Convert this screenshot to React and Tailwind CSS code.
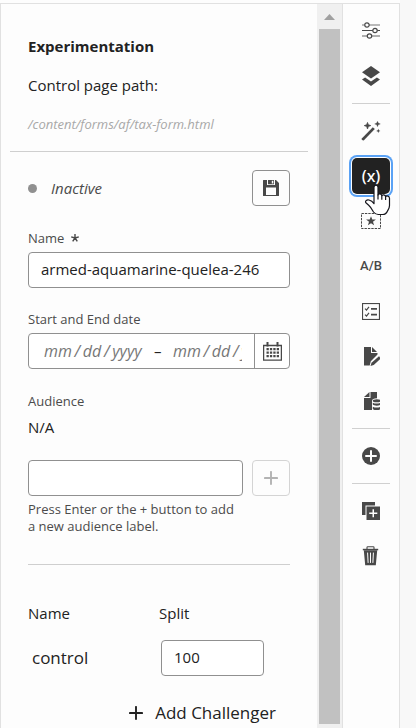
const FieldBorder = "border border-[#909090] rounded-[4px] bg-white";

function Svg({ w = 18, h = 18, className = "", children }) {
  return (
    <svg
      width={w}
      height={h}
      viewBox={`0 0 ${w} ${h}`}
      fill="currentColor"
      aria-hidden="true"
      className={`shrink-0 ${className}`}
    >
      {children}
    </svg>
  );
}

function SlidersIcon() {
  return (
    <Svg>
      <g fill="none" stroke="currentColor" strokeWidth="1.2">
        <path d="M0 3h2.8M7.2 3H18" strokeOpacity=".75" />
        <path d="M0 8.5h10.8M15.2 8.5H18" />
        <path d="M0 14h5.3M9.7 14H18" strokeOpacity=".85" />
        <circle cx="5" cy="3" r="2.2" />
        <circle cx="13" cy="8.5" r="2.2" />
        <circle cx="7.5" cy="14" r="2.2" />
      </g>
    </Svg>
  );
}

function LayersIcon() {
  return (
    <Svg h={20}>
      <path d="M9 0l9 6.2-9 6.2-9-6.2z" />
      <path d="M3.1 11.4L9 15.4l5.900-4L18 13.600 9 20l-9-6.400z" />
    </Svg>
  );
}

function WandIcon() {
  return (
    <Svg w={20} h={20}>
      <path d="M1.600 19.200L.3 17.900 11.800 6.200l2 1.900L2.700 19.600z" />
      <path d="M6.500 1.400l.9 2.300 2.400.9-2.400.9-.9 2.500-.9-2.500-2.400-.9 2.400-.9z" stroke="currentColor" strokeWidth=".7" />
      <path d="M16.500.3l.8 1.800 2 .8-2 .8-.8 2-.8-2-2-.8 2-.8z" stroke="currentColor" strokeWidth=".3" />
      <path d="M17.300 7.800l.6 1.500 1.500.6-1.500.6-.6 1.500-.6-1.500-1.500-.6 1.500-.6z" />
    </Svg>
  );
}

function StarFrameIcon() {
  return (
    <Svg w={20} h={16}>
      <rect x=".5" y=".5" width="19" height="15" fill="none" stroke="currentColor" strokeDasharray="2.4 1" />
      <path d="M10 3.200l1.300 3.400h3.600l-2.900 2.200 1.100 3.500L10 10.200l-3.100 2.100L8 8.800 5.100 6.600h3.600z" />
    </Svg>
  );
}

function ChecklistIcon() {
  return (
    <Svg h={17}>
      <rect x=".5" y=".5" width="17" height="16" fill="none" stroke="currentColor" strokeWidth="1.200" />
      <path d="M3 5.600l1.500 1.400L7 3.800M3 11.600L4.500 13 7 9.800" fill="none" stroke="currentColor" strokeWidth="1.200" />
      <path d="M9 5h6v1.700H9zM9 10.800h6v1.700H9z" />
    </Svg>
  );
}

function PageEditIcon() {
  return (
    <Svg h={20}>
      <path d="M2 1h7v6h6.500v1.400L8.800 15.300 7.700 19.500H2z" />
      <path d="M10 1l5 5h-5z" />
      <path d="M17 10.200l2 2-7.300 6.800-3.200 1 1-3.200z" />
    </Svg>
  );
}

function PageDataIcon() {
  return (
    <Svg h={20}>
      <path d="M8.500 1h6.500v6.200c-3.200 0-5 .9-5 2.600V19H2V7h6.500z" />
      <path d="M7.500 1v5H2z" />
      <ellipse cx="14.700" cy="9.700" rx="3.900" ry="1.500" />
      <path d="M10.800 11.700c2 1.200 5.800 1.200 7.800 0v1.800c-1.200 1.500-6.600 1.500-7.800 0z" />
      <path d="M10.800 15.700c2 1.200 5.800 1.200 7.800 0v2.200c-1.200 1.600-6.600 1.600-7.800 0z" />
    </Svg>
  );
}

function AddCircleIcon() {
  return (
    <Svg>
      <circle cx="9" cy="9" r="9" />
      <path d="M9 4v10M4 9h10" stroke="#fdfdfd" strokeWidth="2" strokeLinecap="round" />
    </Svg>
  );
}

function DuplicateIcon() {
  return (
    <Svg>
      <path d="M0 0h13v3.500H3.500V13H0z" />
      <path d="M4.500 4.500H18V18H4.500z" />
      <path d="M11.250 7.200v8.100M7.200 11.250h8.100" stroke="#fdfdfd" strokeWidth="1.500" />
    </Svg>
  );
}

function TrashIcon() {
  return (
    <Svg h={20}>
      <path d="M5 3V1.500Q5 .8 5.700.8h5.600q.7 0 .7.700V3" fill="none" stroke="currentColor" strokeWidth="1.100" />
      <path d="M.8 2.800h15.400v1.500H.8z" />
      <path d="M1.800 4.300h13.400l-1.400 14.900H3.200z" />
      <path d="M5.600 7l.5 9.500M8.500 7v9.500M11.400 7l-.5 9.500" stroke="#fdfdfd" strokeWidth="1" strokeLinecap="round" />
    </Svg>
  );
}

function SaveIcon() {
  return (
    <Svg w={16} h={16}>
      <path
        fillRule="evenodd"
        d="M.5 0H4v5h8V0h1l3 3v12.500q0 .5-.5.500H.5q-.5 0-.5-.5V.5Q0 0 .5 0zM3 7.500V15h10V7.500z"
      />
      <path fillRule="evenodd" d="M5 0h6v4.300H5zM8.800.8v2.700h1.500V.8z" />
    </Svg>
  );
}

function CalendarIcon() {
  return (
    <Svg w={19} h={19}>
      <path d="M.6 3.500h17.800v14.600H.6z" fill="none" stroke="currentColor" strokeWidth="1.300" />
      <path d="M3.500 0h2v4.500h-2zM13.500 0h2v4.500h-2z" />
      <path d="M3.500 7.200h12.500M3.500 10.700h12.500M3.500 14.200h12.500" stroke="currentColor" strokeWidth="2.300" strokeDasharray="2.300 1.100" />
    </Svg>
  );
}

function PlusIcon() {
  return (
    <Svg w={14} h={14}>
      <path d="M7 .9v12.200M.9 7h12.200" stroke="currentColor" strokeWidth="1.900" strokeLinecap="round" />
    </Svg>
  );
}

function HandCursor() {
  return (
    <svg width="26" height="32" viewBox="0 0 26 32" aria-hidden="true" className="pointer-events-none absolute top-[26px] left-[13px] z-10">
      <path
        d="M9 18V3.200C9 .3 13 .3 13 3.200V11c.5-1.700 3.600-1.400 3.800.7.700-1.400 3.600-1 3.800.9.900-1.200 3.900-.8 3.900 1.700v7.200c0 2.500-1.200 4-2 5.500-.8 2-2.500 3.500-5 3.500h-4.300c-2.200 0-3.500-1-4.700-2.500-1.200-2.200-2.500-4.800-4.800-6.800L.9 18.700c-1-1.500.6-3.300 3.100-2.700 2.200.5 3.500 1.300 5 3.700z"
        fill="#fff"
        stroke="#16161d"
        strokeWidth="1.200"
        strokeLinejoin="round"
      />
      <path d="M13 10.500v5M16.800 11.500v4.200M20.600 12.500v3.500" stroke="#16161d" strokeWidth="1.200" />
    </svg>
  );
}

const groups = [
  [
    { label: "Properties", icon: <SlidersIcon /> },
    { label: "Layers", icon: <LayersIcon /> },
  ],
  [
    { label: "Generate", icon: <WandIcon /> },
    { label: "Experimentation", icon: <span className="font-['Noto_Sans',sans-serif] text-base font-medium">(x)</span>, active: true },
    { label: "Highlights", icon: <StarFrameIcon /> },
    { label: "A/B", icon: <span className="font-['Roboto',sans-serif] text-[13px] font-medium">A/B</span> },
    { label: "Rules", icon: <ChecklistIcon /> },
    { label: "Edit page", icon: <PageEditIcon /> },
    { label: "Page data", icon: <PageDataIcon /> },
  ],
  [{ label: "Add", icon: <AddCircleIcon /> }],
  [
    { label: "Duplicate", icon: <DuplicateIcon /> },
    { label: "Delete", icon: <TrashIcon /> },
  ],
];

function Rail() {
  return (
    <nav className="flex w-[58px] shrink-0 flex-col items-center gap-[9px] border-x border-[#e1e1e1] pt-[9px]">
      {groups.map((group, i) => (
        <div key={i} className="flex flex-col gap-[9px]">
          {i > 0 && <hr className="w-[38px] border-[#d0d0d0]" />}
          {group.map((item) => (
            <div key={item.label} className="relative">
              <button
                type="button"
                aria-label={item.label}
                className={
                  item.active
                    ? "flex h-9 w-[38px] items-center justify-center rounded-[5px] bg-[#222] text-white ring-2 ring-[#5aa2f5] ring-offset-1 ring-offset-[#fdfdfd]"
                    : "flex h-9 w-[38px] items-center justify-center rounded-[5px] text-[#484848]"
                }
              >
                {item.icon}
              </button>
              {item.active && <HandCursor />}
            </div>
          ))}
        </div>
      ))}
    </nav>
  );
}

function Scrollbar() {
  return (
    <div className="flex w-[25px] shrink-0 flex-col items-center bg-[#f0f0f0] pb-1" aria-hidden="true">
      <div className="flex h-[25px] items-center">
        <svg width="11" height="6" viewBox="0 0 11 6">
          <path d="M0 6L5.500 0 11 6z" fill="#a0a0a0" />
        </svg>
      </div>
      <div className="w-[21px] flex-1 bg-[#c1c1c1]" />
    </div>
  );
}

function DateInput({ label }) {
  return (
    <input
      type="text"
      aria-label={label}
      placeholder={"mm\u2009/\u2009dd\u2009/\u2009yyyy"}
      className="h-full min-w-0 bg-transparent text-base italic outline-none placeholder:text-[#777]"
      size={1}
    />
  );
}

function ExperimentPanel() {
  return (
    <main className="min-w-0 flex-1 text-[15px] leading-5 text-[#222]">
      <header className="mx-[9px] border-b border-[#cfcfcf] pt-[32px] pb-[17px] pl-[18px]">
        <h1 className="font-bold">Experimentation</h1>
        <p className="mt-[19px]">Control page path:</p>
        <p className="mt-[19px] text-[13px] text-[#a8a8a8] italic">/content/forms/af/tax-form.html</p>
      </header>

      <div className="mx-[27px]">
        <div className="mt-[18px] flex h-9 items-center">
          <span className="mr-[14px] size-[9px] rounded-full bg-[#909090]" />
          <span className="flex-1 text-[#4b4b4b] italic">Inactive</span>
          <button type="button" aria-label="Save" className="flex h-9 w-[38px] items-center justify-center rounded-[4px] border border-[#909090] text-[#484848]">
            <SaveIcon />
          </button>
        </div>

        <label htmlFor="name" className="mt-[22px] flex items-center text-[13px] text-[#4b4b4b]">
          Name
          <svg width="8" height="8" viewBox="0 0 8 8" aria-hidden="true" className="ml-[7px]">
            <path d="M4 4V0M4 4l3.800-1.200M4 4l2.300 3.400M4 4L1.700 7.400M4 4L.2 2.800" stroke="#484848" strokeWidth="1.400" />
          </svg>
        </label>
        <input id="name" defaultValue="armed-aquamarine-quelea-246" className={`mt-1 block h-9 w-full px-3 pb-[2px] ${FieldBorder}`} />

        <fieldset className="mt-[21px]">
          <legend className="text-[13px] text-[#4b4b4b]">Start and End date</legend>
          <div className={`mt-1 flex h-9 items-center ${FieldBorder}`}>
            <div className="flex h-full min-w-0 flex-1 items-center pr-3 pl-[15px]">
              <span className="h-full w-[110px] shrink-0 *:w-full">
                <DateInput label="Start date" />
              </span>
              <span className="w-[19px] shrink-0">–</span>
              <span className="h-full min-w-0 flex-1 *:w-full">
                <DateInput label="End date" />
              </span>
            </div>
            <button type="button" aria-label="Calendar" className="flex h-full w-[35px] items-center justify-center border-l border-[#909090] text-[#484848]">
              <CalendarIcon />
            </button>
          </div>
        </fieldset>

        <label htmlFor="audience" className="mt-[22px] block text-[13px] text-[#4b4b4b]">
          Audience
        </label>
        <p className="mt-[6px]">N/A</p>
        <div className="mt-[23px] flex gap-[9px]">
          <input id="audience" aria-describedby="audience-help" className={`h-9 min-w-0 flex-1 px-3 ${FieldBorder}`} />
          <button type="button" disabled aria-label="Add audience" className="flex h-9 w-[38px] items-center justify-center rounded-[4px] border border-[#d4d4d4] text-[#b3b3b3]">
            <PlusIcon />
          </button>
        </div>
        <p id="audience-help" className="mt-[5px] mr-[47px] text-[13px] leading-[17px] text-[#4b4b4b]">
          Press Enter or the + button to add a new audience label.
        </p>

        <hr className="mt-[29px] border-[#cfcfcf]" />

        <table className="mt-[38px] w-full table-fixed text-left">
          <thead>
            <tr>
              <th className="font-normal">Name</th>
              <th className="font-normal">Split</th>
            </tr>
          </thead>
          <tbody>
            <tr>
              <td className="pt-[17px] pl-1 text-[17px]">
                <label htmlFor="split">control</label>
              </td>
              <td className="pt-[17px] pl-[2px]">
                <input id="split" defaultValue="100" className={`block h-9 w-[103px] px-3 pb-[2px] ${FieldBorder}`} />
              </td>
            </tr>
          </tbody>
        </table>

        <button type="button" className="mt-[27px] mr-[14px] ml-auto flex items-center gap-3 text-[17px]">
          <PlusIcon />
          Add Challenger
        </button>
      </div>
    </main>
  );
}

export default function App() {
  return (
    <div className="flex min-h-screen bg-[#f8f8f8] pr-4 font-['Open_Sans','Noto_Sans',sans-serif]">
      <div className="flex min-w-0 flex-1 bg-[#fdfdfd] pt-[3px]">
        <div className="flex min-w-0 flex-1 border-t border-l border-[#e1e1e1]">
          <ExperimentPanel />
          <Scrollbar />
          <Rail />
        </div>
      </div>
    </div>
  );
}
